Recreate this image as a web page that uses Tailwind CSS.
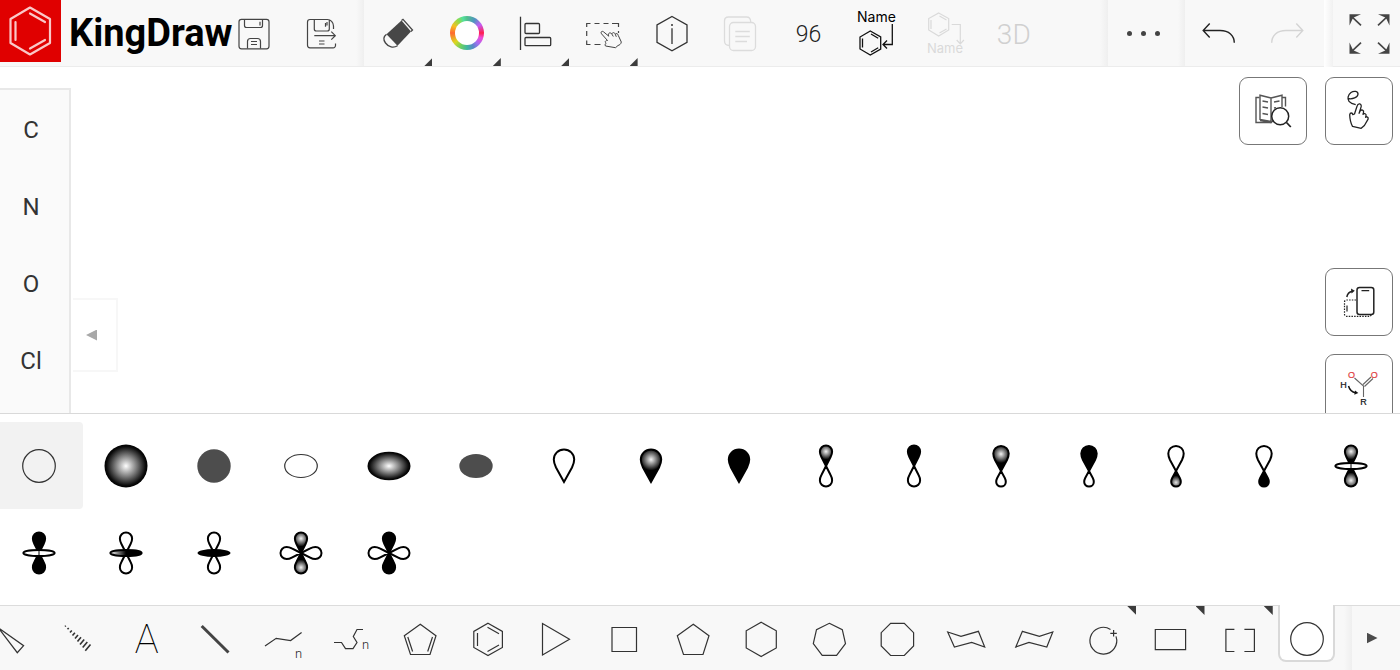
<!DOCTYPE html>
<html lang="en">
<head>
<meta charset="utf-8">
<meta name="viewport" content="width=device-width, initial-scale=1">
<title>KingDraw</title>
<script src="https://cdn.jsdelivr.net/npm/@tailwindcss/browser@4"></script>
</head>
<body class="h-screen flex flex-col overflow-hidden bg-white font-['Roboto',sans-serif] text-[#333]">

<!-- Shared shapes -->
<svg class="absolute w-0 h-0" aria-hidden="true">
  <defs>
    <radialGradient id="ball"><stop offset="0" stop-color="#fff"/><stop offset=".5" stop-color="#7a7a7a"/><stop offset=".9" stop-color="#0c0c0c"/><stop offset="1" stop-color="#000"/></radialGradient>
    <radialGradient id="drop" gradientUnits="userSpaceOnUse" cx="30" cy="23.5" r="11"><stop offset="0" stop-color="#f4f4f4"/><stop offset="1" stop-color="#000"/></radialGradient>
    <radialGradient id="lobeFill" gradientUnits="userSpaceOnUse" cx="30" cy="15.5" r="8"><stop offset="0" stop-color="#f4f4f4"/><stop offset="1" stop-color="#000"/></radialGradient>
    <radialGradient id="bigFill" gradientUnits="userSpaceOnUse" cx="30" cy="18" r="9"><stop offset="0" stop-color="#f4f4f4"/><stop offset="1" stop-color="#000"/></radialGradient>
    <radialGradient id="smallFill" gradientUnits="userSpaceOnUse" cx="30" cy="46.5" r="7"><stop offset="0" stop-color="#e8e8e8"/><stop offset="1" stop-color="#000"/></radialGradient>
    <linearGradient id="ringFill"><stop offset="0" stop-color="#fff"/><stop offset=".5" stop-color="#000"/></linearGradient>
    <path id="teardrop" d="M30 46 22 31.500C20.500 28.500 19.800 26 19.800 23.600a10.2 10.2 0 0 1 20.400 0C40.200 26 39.500 28.500 38 31.500z" stroke="#000" stroke-width="2"/>
    <path id="lobe" d="M30 30 25.300 20.800C24.300 19 23.900 17.300 23.900 15.600a6.100 6.100 0 0 1 12.200 0C36.100 17.300 35.700 19 34.700 20.800z" stroke="#000" stroke-width="2" stroke-linejoin="bevel"/>
    <path id="biglobe" d="M30 35 24 24C22.900 21.800 22.300 19.700 22.300 17.600a7.700 7.700 0 0 1 15.400 0C37.700 19.700 37.100 21.800 36 24z" stroke="#000" stroke-width="2" stroke-linejoin="bevel"/>
    <path id="smalllobe" d="M30 35 26.200 42C25.400 43.500 25.200 44.800 25.200 46a4.800 4.600 0 0 0 9.600 0C34.800 44.800 34.600 43.500 33.800 42z" stroke="#000" stroke-width="2" stroke-linejoin="bevel"/>
  </defs>
</svg>

<header class="flex h-[67px] shrink-0 border-b border-[#ececec] bg-[#f8f8f8]">
  <div class="flex w-[220px] shrink-0">
    <div class="h-[62px] w-[61px] shrink-0 bg-[#e00000]">
      <svg class="size-full" viewBox="0 0 61 62" fill="none" stroke="#fac8c8" stroke-width="2.200" stroke-linejoin="round" stroke-linecap="round"><path d="M30 7.500 50 19v24L30 54.500 10.500 43V19zM15.500 22v18M30 13.500l15 8.500M30 48.500 45 40"/></svg>
    </div>
    <h1 class="pl-2 text-[38px] leading-[66px] font-bold text-black">KingDraw</h1>
  </div>
  <div class="flex w-[144px] shrink-0">
    <button aria-label="Save" class="flex w-[68px] items-center justify-center"><svg class="size-[60px]" viewBox="0 0 60 60" fill="none" stroke="#444" stroke-width="1.2"><rect x="15" y="16.300" width="30" height="29.500" rx="2.500"/><path d="M20.500 16.500v6a2 2 0 0 0 2 2h14a2 2 0 0 0 2-2v-6M36 18.700v3.800M23.500 45.500v-7a3 3 0 0 1 3-3h7a3 3 0 0 1 3 3v7M27 38.500h6M27 41.500h6"/></svg></button>
    <button aria-label="Save as" class="flex w-[68px] items-center justify-center"><svg class="size-[60px]" viewBox="0 0 60 60" fill="none" stroke="#444" stroke-width="1.200"><path d="M43.500 40.500v2a2.300 2.300 0 0 1-2.300 2.300H18a2.500 2.500 0 0 1-2.500-2.500V19a2.500 2.500 0 0 1 2.500-2.500h17.500c3 0 6 3 6 6.500v3M22.300 16.500v9.500a2 2 0 0 0 2 2h11a2 2 0 0 0 2-2v-9.500M33.500 20v3.800M35 19v3.500M22.300 32.700h21M39.300 28.700l4 4-4 4M27 38h5.500M27 41h5.500"/></svg></button>
    <div class="ml-auto w-[8px] bg-linear-to-r from-[#f8f8f8] to-[#efefef]"></div>
  </div>

  <div class="grid flex-1 grid-cols-10 pr-[52px]">
    <button aria-label="Eraser" class="relative flex items-center justify-center"><svg class="size-[60px]" viewBox="0 0 60 60"><path d="M33.500 17.500 43 28.500 29.500 42.700 18.500 31.200z" fill="#474747"/><path d="M33.500 17.500l1.500-1.200 9.500 10.700-1.500 1.500M18.500 31.200c-3 2.300-3.400 5.500-1 8.800 3 4.200 8 5.200 12 2.700" fill="none" stroke="#474747" stroke-width="1.300"/></svg><span class="absolute right-0 bottom-0 size-2 bg-[#3c3c3c] [clip-path:polygon(100%_0,100%_100%,0_100%)]"></span></button>
    <button aria-label="Color" class="relative flex items-center justify-center"><span class="size-[34px] rounded-full bg-[conic-gradient(#52bf8c,#4f95c0_30deg,#c45cf5_58deg,#ff1f4c_90deg,#f04ad8_108deg,#a070f0_135deg,#5a86c8_155deg,#3fb8a0_180deg,#6fd060_205deg,#dcd820_232deg,#ff6830_270deg,#f5c020_298deg,#8edc4c_325deg,#52e0a0_345deg,#52bf8c)] p-[5px]"><span class="block size-6 rounded-full bg-white"></span></span><span class="absolute right-0 bottom-0 size-2 bg-[#3c3c3c] [clip-path:polygon(100%_0,100%_100%,0_100%)]"></span></button>
    <button aria-label="Align" class="relative flex items-center justify-center"><svg class="size-[60px]" viewBox="0 0 60 60" fill="none" stroke="#333" stroke-width="1.300"><path d="M15.500 13.700V47"/><rect x="20" y="20.500" width="14.500" height="10" rx="1"/><rect x="20" y="34.500" width="25.700" height="8.200" rx="1"/></svg><span class="absolute right-0 bottom-0 size-2 bg-[#3c3c3c] [clip-path:polygon(100%_0,100%_100%,0_100%)]"></span></button>
    <button aria-label="Select" class="relative flex items-center justify-center"><svg class="size-[60px]" viewBox="0 0 60 60" fill="none" stroke="#444" stroke-width="1.200"><path d="M13.700 24v-3.500h3.800M21.500 20.500h5M30.500 20.500h5M39 20.500h6.500V24M13.700 28v5M13.700 37.500v4h3.800M21.500 41.500h6M45.500 28v2"/><path d="M34.500 37.500l-6-6.700c-1.300-1.600.5-3.300 2-2l5.300 4.400c-1.500-3 1.500-4.500 3-2.200.5-2 3-1.800 3.500.3.800-1.300 2.800-.8 3 1.200l3 6.500c-.3 2.200-1.800 3-3.300 3.500l-2.500 2.200-10-1.700c-.8-1.200-.2-2.400.6-2.700-1.600-1.800-.6-2.800 1.400-2.800z" stroke-linejoin="round" stroke-width="1"/><path d="M38.800 31l1.500 2.500M42.300 31.300l1 2.500" stroke-width="1"/></svg><span class="absolute right-0 bottom-0 size-2 bg-[#3c3c3c] [clip-path:polygon(100%_0,100%_100%,0_100%)]"></span></button>
    <button aria-label="Info" class="flex items-center justify-center"><svg class="size-[60px]" viewBox="0 0 60 60" fill="none" stroke="#333" stroke-width="1.300"><path d="M30 13.500 45 22v17.300L30 47.800 15 39.300V22zM30 25.300V41"/><circle cx="30" cy="22" r="1" fill="#333" stroke="none"/></svg></button>
    <button aria-label="Copy" class="flex items-center justify-center"><svg class="size-[60px]" viewBox="0 0 60 60" fill="none" stroke="#dcdcdc" stroke-width="1.300"><path d="M19.500 42.500c-3 0-5-1.500-5-4.500V18c0-2.500 1.700-4 4-4h18c2.700 0 4.200 2 4.200 5"/><rect x="19.500" y="19.500" width="26" height="28" rx="4"/><path d="M25.300 28.500h14.500M25.300 33.500h14.500M25.300 38.500H37"/></svg></button>
    <button aria-label="Zoom level 96" class="flex items-center justify-center pt-1 text-[23px] font-light text-[#222]">96</button>
    <button aria-label="Name to structure" class="flex items-center justify-center"><svg class="size-[60px]" viewBox="0 0 60 60" fill="none" stroke="#111" stroke-width="1.300"><text x="10" y="19" font-family="Inter, sans-serif" font-size="14" fill="#000" stroke="none">Name</text><path d="M23.300 28 33.700 34v12l-10.400 6-10.300-6V34zM15.500 35.500v9M24 31l7.200 4.200M24 49l7.200-4.200M45.300 21v20.500h-9M40 37.500l-4 4 4 4"/></svg></button>
    <button aria-label="Structure to name" disabled class="flex items-center justify-center"><svg class="size-[60px]" viewBox="0 0 60 60" fill="none" stroke="#dadada" stroke-width="1.200"><text x="12" y="50" font-family="Inter, sans-serif" font-size="13" fill="#dadada" stroke="none">Name</text><path d="M23.700 10 33.700 15.500v11.500l-10 6-10-6V15.500zM16 17v9M24.500 13l7 4M24.500 30l7-4M36.700 21.500h8.600v19M41.700 37l3.600 3.800 3.600-3.800"/></svg></button>
    <button disabled class="flex items-center justify-center pt-1 text-[28px] font-light text-[#d0d0d0]">3D</button>
  </div>

  <div class="w-2 shrink-0 bg-linear-to-r from-[#f8f8f8] to-[#efefef]"></div>
  <button aria-label="More" class="flex w-[70px] shrink-0 items-center justify-center gap-[9px]"><span class="size-[5px] rounded-full bg-[#444]"></span><span class="size-[5px] rounded-full bg-[#444]"></span><span class="size-[5px] rounded-full bg-[#444]"></span></button>
  <div class="w-[7px] shrink-0 bg-linear-to-r from-[#f8f8f8] to-[#efefef]"></div>
  <div class="flex w-[139px] shrink-0">
    <button aria-label="Undo" class="flex w-[68px] items-center justify-center"><svg class="size-[60px]" viewBox="0 0 60 60" fill="none" stroke="#222" stroke-width="1.400"><path d="M20.700 20.500l-6.500 7 6.500 7M14.500 27.500h16.500c9 0 14.300 5 14.300 12.300"/></svg></button>
    <button aria-label="Redo" disabled class="flex w-[68px] items-center justify-center"><svg class="size-[60px]" viewBox="0 0 60 60" fill="none" stroke="#d4d4d4" stroke-width="1.400"><path d="M39.300 20.500l6.500 7-6.500 7M45.500 27.500H29c-9 0-14.300 5-14.300 12.300"/></svg></button>
  </div>
  <div class="h-[67px] w-[9px] shrink-0 bg-linear-to-r from-white to-[#f1f1f1]"></div>
  <button aria-label="Full screen" class="flex w-[67px] shrink-0 items-center justify-center"><svg class="size-[60px]" viewBox="0 0 60 60" fill="#444" stroke="#444"><g id="fsArrow"><path d="M12.500 11.300H24l-7.300 3.200L15.500 16l-3 6.500z" stroke="none"/><path d="M15 13.800 24 22.300" stroke-width="1.600"/></g><use href="#fsArrow" transform="matrix(-1 0 0 1 65 0)"/><use href="#fsArrow" transform="matrix(1 0 0 -1 0 62)"/><use href="#fsArrow" transform="matrix(-1 0 0 -1 65 62)"/></svg></button>
</header>

<main class="flex min-h-0 flex-1 overflow-hidden">
  <nav aria-label="Atoms" class="mt-[21px] w-[71px] shrink-0 border-t-2 border-r-2 border-[#e8e8e8] bg-[#fafafa] pt-px pr-[7px]">
    <button class="block h-[77px] w-full text-2xl">C</button>
    <button class="block h-[77px] w-full text-2xl">N</button>
    <button class="block h-[77px] w-full text-2xl">O</button>
    <button class="block h-[77px] w-full text-2xl">Cl</button>
  </nav>
  <button aria-label="Collapse" class="mt-[231px] ml-[2px] flex h-[74px] w-[45px] shrink-0 items-center justify-center border-2 border-l-0 border-[#f7f7f7] pr-[6px]"><span class="h-[11px] w-[11px] bg-[#a8a8a8] [clip-path:polygon(100%_0,100%_100%,0_50%)]"></span></button>
  <section aria-label="Drawing canvas" class="flex-1"></section>
  <div class="flex gap-[18px] pt-[10px] pr-[7px]">
    <button aria-label="Search" class="flex size-[68px] items-center justify-center rounded-[9px] border border-[#777]"><svg class="size-[60px] shrink-0" viewBox="0 0 60 60" fill="none" stroke="#555" stroke-width="1.400"><path d="M16.500 16.500h-3.500v25h16M39 16.500h3.500v9"/><path d="M28 17v23.500l-11-2V14.200l11 2.800 11-2.800V26M28 40.500h2M19.500 20l5.500 1M19.500 26l5.500 1M19.500 32.500l5.500 1M31 21l5.500-1M31 27l2-.400M17 39.500l11 2"/><circle cx="37.200" cy="35.300" r="8.500" fill="#fff" stroke="#222" stroke-width="1.500"/><path d="M43.500 41.500l4.300 4.500" stroke="#222" stroke-width="1.800"/></svg></button>
    <div class="flex flex-col gap-[18px]">
      <button aria-label="Gesture" class="mb-[105px] flex size-[68px] shrink-0 items-center justify-center rounded-[9px] border border-[#777]"><svg class="size-[60px] shrink-0" viewBox="0 0 60 60" fill="none" stroke="#222" stroke-width="1.300" stroke-linejoin="round"><path d="M18.700 17.500c5 1.200 10-1.200 10.300-4.300.2-3-4-3.700-7-1.700-3 2.200-4 6.300-2 8.800 1.500 1.800 4.200 2.800 6.700 3.400"/><path d="M25.500 33l2.600-8c.9-3.200 4.800-2.700 4 .9l-2 6.400 1-2.300c1.200-1.900 4.200-.9 3.400 1.700l-.5 1.600c1.200-1.400 3.700-.6 3 1.700l-.4 1.300c1.200-1 3-.2 2.500 1.800l-3.700 6.400-3.200 2.800-8.700-2c-2-3.300-2.600-6.500-2.800-11.500.4-2.400 2.700-2.300 3.100-.2z"/></svg></button>
      <button aria-label="Rotate" class="flex size-[68px] shrink-0 items-center justify-center rounded-[9px] border border-[#777]"><svg class="size-[60px] shrink-0" viewBox="0 0 60 60" fill="none" stroke="#222" stroke-width="1.500"><path d="M27 28H17.500a2 2 0 0 0-2 2v12.300a2 2 0 0 0 2 2H41l2-2" stroke-dasharray="1.500 1.200" stroke-width="1.200"/><rect x="28" y="15.500" width="16.800" height="27" rx="2.500"/><path d="M32.500 18.700h7.700M18 33.500v6" stroke-width="1.200"/><path d="M17.800 25c.6-3.300 2.500-5.200 5.500-5.800"/><path d="M22 16.500l3.800 2.200-3.300 2.800z" fill="#222" stroke="none"/></svg></button>
      <button aria-label="Reaction mechanism" class="flex size-[68px] shrink-0 items-center justify-center rounded-[9px] border border-[#777]"><svg class="size-[60px] shrink-0" viewBox="0 0 60 60" fill="none" stroke="#666" stroke-width="1.100" font-family="Liberation Sans, sans-serif" font-size="9"><g stroke-width=".2" text-anchor="middle"><text x="22.500" y="19.500" fill="#e04040" stroke="#e04040">O</text><text x="45.200" y="19.500" fill="#e04040" stroke="#e04040">O</text><text x="14.500" y="30" fill="#111" stroke="#111">H</text><text x="34.500" y="47" fill="#111" stroke="#111">R</text></g><path d="M25.500 20l9 8v11M34 26.500l8-7.500M35.500 28.500l8.500-8"/><path d="M19.500 28c1.200 4 4 6.300 7 6.700" stroke="#111" stroke-width="1.500"/><path d="M26 32.500l3.300 2.500-4 1.800z" fill="#111" stroke="none"/></svg></button>
    </div>
  </div>
</main>

<section aria-label="Orbitals" class="h-[192px] shrink-0 overflow-hidden border-t border-[#d9d9d9] bg-white pt-2">
  <div class="mr-[5px] -ml-[5px] grid grid-cols-16 auto-rows-[87px] [&_svg]:m-auto [&_svg]:size-[60px]">
    <button aria-label="s orbital" aria-pressed="true" class="rounded bg-[#f2f2f2]"><svg viewBox="0 0 60 60"><circle cx="30" cy="30" r="16.300" fill="none" stroke="#333" stroke-width="1.200"/></svg></button>
    <button aria-label="s orbital, shaded"><svg viewBox="0 0 60 60"><circle cx="30" cy="30" r="21.500" fill="url(#ball)"/></svg></button>
    <button aria-label="s orbital, filled"><svg viewBox="0 0 60 60"><circle cx="30" cy="30" r="16.700" fill="#4d4d4d"/></svg></button>
    <button aria-label="Oval orbital"><svg viewBox="0 0 60 60"><ellipse cx="30" cy="30" rx="16.300" ry="11.500" fill="none" stroke="#333" stroke-width="1.200"/></svg></button>
    <button aria-label="Oval orbital, shaded"><svg viewBox="0 0 60 60"><ellipse cx="30" cy="30" rx="21.500" ry="14.300" fill="url(#ball)"/></svg></button>
    <button aria-label="Oval orbital, filled"><svg viewBox="0 0 60 60"><ellipse cx="30" cy="30" rx="16.700" ry="12" fill="#4d4d4d"/></svg></button>
    <button aria-label="Lobe"><svg viewBox="0 0 60 60" fill="none"><use href="#teardrop"/></svg></button>
    <button aria-label="Lobe, shaded"><svg viewBox="0 0 60 60"><use href="#teardrop" fill="url(#drop)"/></svg></button>
    <button aria-label="Lobe, filled"><svg viewBox="0 0 60 60"><use href="#teardrop"/></svg></button>
    <button aria-label="p orbital, shaded"><svg viewBox="0 0 60 60"><use href="#lobe" fill="url(#lobeFill)"/><use href="#lobe" fill="none" transform="rotate(180 30 30)"/></svg></button>
    <button aria-label="p orbital, filled"><svg viewBox="0 0 60 60"><use href="#lobe"/><use href="#lobe" fill="none" transform="rotate(180 30 30)"/></svg></button>
    <button aria-label="Hybrid orbital, large lobe shaded"><svg viewBox="0 0 60 60"><use href="#biglobe" fill="url(#bigFill)"/><use href="#smalllobe" fill="none"/></svg></button>
    <button aria-label="Hybrid orbital, large lobe filled"><svg viewBox="0 0 60 60"><use href="#biglobe"/><use href="#smalllobe" fill="none"/></svg></button>
    <button aria-label="Hybrid orbital, small lobe shaded"><svg viewBox="0 0 60 60"><use href="#biglobe" fill="none"/><use href="#smalllobe" fill="url(#smallFill)"/></svg></button>
    <button aria-label="Hybrid orbital, small lobe filled"><svg viewBox="0 0 60 60"><use href="#biglobe" fill="none"/><use href="#smalllobe"/></svg></button>
    <button aria-label="dz2 orbital, shaded lobes"><svg viewBox="0 0 60 60"><use href="#lobe" fill="url(#lobeFill)"/><use href="#lobe" fill="url(#lobeFill)" transform="rotate(180 30 30)"/><ellipse cx="30" cy="30" rx="15.600" ry="3" fill="#fff" stroke="#000" stroke-width="2"/><path d="M30 27v6" stroke="#000"/></svg></button>
    <button aria-label="dz2 orbital, filled lobes"><svg viewBox="0 0 60 60"><use href="#lobe"/><use href="#lobe" transform="rotate(180 30 30)"/><ellipse cx="30" cy="30" rx="15.600" ry="3" fill="#fff" stroke="#000" stroke-width="2"/><path d="M30 27v6" stroke="#000"/></svg></button>
    <button aria-label="dz2 orbital, shaded ring"><svg viewBox="0 0 60 60"><use href="#lobe" fill="none"/><use href="#lobe" fill="none" transform="rotate(180 30 30)"/><ellipse cx="30" cy="30" rx="15.600" ry="3" fill="url(#ringFill)" stroke="#000" stroke-width="2"/></svg></button>
    <button aria-label="dz2 orbital, filled ring"><svg viewBox="0 0 60 60"><use href="#lobe" fill="none"/><use href="#lobe" fill="none" transform="rotate(180 30 30)"/><ellipse cx="30" cy="30" rx="16.500" ry="4"/></svg></button>
    <button aria-label="d orbital, shaded"><svg viewBox="0 0 60 60"><use href="#lobe" fill="none" transform="rotate(90 30 30)"/><use href="#lobe" fill="none" transform="rotate(270 30 30)"/><use href="#lobe" fill="url(#lobeFill)"/><use href="#lobe" fill="url(#lobeFill)" transform="rotate(180 30 30)"/></svg></button>
    <button aria-label="d orbital, filled"><svg viewBox="0 0 60 60"><use href="#lobe" fill="none" transform="rotate(90 30 30)"/><use href="#lobe" fill="none" transform="rotate(270 30 30)"/><use href="#lobe"/><use href="#lobe" transform="rotate(180 30 30)"/></svg></button>
  </div>
</section>

<footer class="flex h-[65px] shrink-0 border-t border-[#dcdcdc] bg-[#f8f8f8]">
  <div class="-ml-6 grid flex-1 grid-cols-20 pr-[3px] [&_button]:relative [&_button]:flex [&_button]:items-center [&_button]:justify-center [&_svg]:size-[60px] [&_svg]:shrink-0 [&_svg]:fill-none [&_svg]:stroke-[#333] [&_svg]:stroke-[1.200]">
    <button aria-label="Wedge"><svg viewBox="0 0 60 60"><path d="M18 19.500 43.600 37.700 37.300 44.700z"/></svg></button>
    <button aria-label="Hashed bond"><svg viewBox="0 0 60 60"><path d="M17 18.500l.8-.8M19.500 21.300l1.200-1.300M22 24.500l1.800-2M24.500 27.500l2.400-2.800M27 30.500l3-3.500M29.500 33.500l3.500-4.200M32 36.500l4.200-5M34.700 39.500l4.600-5.500M37.300 42.800l5.200-6.300" stroke-width="1.600"/></svg></button>
    <button aria-label="Text" class="pt-1 text-[40px] leading-none font-thin text-black">A</button>
    <button aria-label="Bold bond"><svg viewBox="0 0 60 60"><path d="M16.700 18 43.500 44.500" stroke="#444" class="stroke-3"/></svg></button>
    <button aria-label="Chain"><svg viewBox="0 0 60 60"><path d="M12 38 23.200 30.300l14.400 2.200L48.600 24.500"/><text x="42" y="49.500" font-size="13" class="fill-[#222] stroke-none font-light">n</text></svg></button>
    <button aria-label="Flexible chain"><svg viewBox="0 0 60 60"><path d="M13 34.500h7.500l4 6.200H32l4-6.200-3.700-6L36 21.500h6"/><text x="41" y="41" font-size="13" class="fill-[#222] stroke-none font-light">n</text></svg></button>
    <button aria-label="Cyclopentadiene"><svg viewBox="0 0 60 60"><path d="M30.300 16.300 46 27.700 40 46.500H20.500L14.300 27.700zM17.800 29l4.800 14.500M42.500 29l-4.800 14.500"/></svg></button>
    <button aria-label="Benzene"><svg viewBox="0 0 60 60"><path d="M30 15.200 44.400 23.400v16L30 47.600 15.800 39.400v-16zM19.500 25v13M29.500 19.300l11.500 6.500M29.500 43.500l11.500-6.500"/></svg></button>
    <button aria-label="Cyclopropane"><svg viewBox="0 0 60 60"><path d="M16.500 15.500v31.500l27-15.700z"/></svg></button>
    <button aria-label="Cyclobutane"><svg viewBox="0 0 60 60"><path d="M18 19.500h24.500v24H18z"/></svg></button>
    <button aria-label="Cyclopentane"><svg viewBox="0 0 60 60"><path d="M30.300 16.300 46 27.700 40 46.500H20.500L14.300 27.700z"/></svg></button>
    <button aria-label="Cyclohexane"><svg viewBox="0 0 60 60"><path d="M30.200 14.300 45.300 22.800v17.200L30.200 48.500 15.200 40V22.800z"/></svg></button>
    <button aria-label="Cycloheptane"><svg viewBox="0 0 60 60"><path d="M30.300 15.300 43.300 21.700 46.500 35.700 37.600 47.400H23.200L14.300 35.700 17.500 21.700z"/></svg></button>
    <button aria-label="Cyclooctane"><svg viewBox="0 0 60 60"><path d="M23.600 15.300h13.700l9.300 9.400V38l-9.300 9.500H23.600L14.200 38V24.700z"/></svg></button>
    <button aria-label="Chair one"><svg viewBox="0 0 60 60"><path d="M11.700 24 25 28.300l17.400-5L48.700 39l-13-4.500L18.400 39z"/></svg></button>
    <button aria-label="Chair two"><svg viewBox="0 0 60 60"><path d="M18.400 23.300l17 5L48.800 24l-6 15L25 34.500 11.800 39z"/></svg></button>
    <button aria-label="Charge"><svg viewBox="0 0 60 60"><path d="M38.500 21.400a13.400 13.400 0 1 0 5.500 7M41.600 22v6.500M38.300 25.300h6.500"/></svg><span class="absolute top-0 right-0 size-[9px] bg-[#3c3c3c] [clip-path:polygon(0_0,100%_0,100%_100%)]"></span></button>
    <button aria-label="Rectangle"><svg viewBox="0 0 60 60"><path d="M15.300 21.500h30.300v20.200H15.300z"/></svg><span class="absolute top-0 right-0 size-[9px] bg-[#3c3c3c] [clip-path:polygon(0_0,100%_0,100%_100%)]"></span></button>
    <button aria-label="Brackets"><svg viewBox="0 0 60 60"><path d="M25.400 21.300h-8.500v22.200h8.500M35.400 21.300h10v22.200h-10"/></svg><span class="absolute top-0 right-0 size-[9px] bg-[#3c3c3c] [clip-path:polygon(0_0,100%_0,100%_100%)]"></span></button>
    <button aria-label="Orbitals" aria-pressed="true"><span class="-mt-px flex h-[57px] w-[57px] items-center justify-center self-start rounded-b-lg border-2 border-t-0 border-[#d9d9d9] bg-white pt-[10px]"><svg viewBox="0 0 60 60"><circle cx="30" cy="31" r="16.300"/></svg></span></button>
  </div>
  <div class="w-2 shrink-0 bg-linear-to-r from-[#f8f8f8] to-[#efefef]"></div>
  <button aria-label="Scroll right" class="flex w-[48px] shrink-0 items-center justify-center pr-[8px]"><span class="h-[11px] w-[11px] bg-[#4c4c4c] [clip-path:polygon(0_0,100%_50%,0_100%)]"></span></button>
</footer>
</body>
</html>
